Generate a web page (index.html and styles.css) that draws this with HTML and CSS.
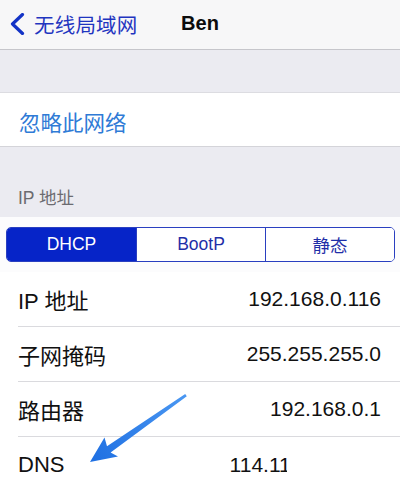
FILE: index.html
```html
<!DOCTYPE html>
<html lang="zh-CN">
<head>
<meta charset="utf-8">
<title>Ben</title>
<link rel="stylesheet" href="styles.css">
</head>
<body>
<div class="screen">
  <header class="nav">
    <div class="nav-back">
      <svg class="chev" width="16" height="22" viewBox="0 0 16 22"><path d="M13.5 1.5 L3.5 11 L13.5 20.5" fill="none" stroke="#1333c6" stroke-width="3.2" stroke-linecap="round" stroke-linejoin="round"/></svg>
      <span class="nav-back-text">无线局域网</span>
    </div>
    <div class="nav-title">Ben</div>
    <div></div>
  </header>

  <div class="spacer"></div>

  <div class="group">
    <div class="action">忽略此网络</div>
  </div>

  <div class="section-head">IP 地址</div>

  <div class="group group-ip">
    <div class="seg-wrap">
      <div class="seg">
        <div class="seg-item active">DHCP</div>
        <div class="seg-item">BootP</div>
        <div class="seg-item">静态</div>
      </div>
    </div>
    <div class="row"><span class="label">IP 地址</span><span class="value">192.168.0.116</span></div>
    <div class="row"><span class="label">子网掩码</span><span class="value">255.255.255.0</span></div>
    <div class="row"><span class="label">路由器</span><span class="value">192.168.0.1</span></div>
    <div class="row row-last"><span class="label">DNS</span><span class="value">114.114.114.114</span></div>
  </div>

  <div class="watermark"></div>

  <svg class="arrow" width="400" height="497" viewBox="0 0 400 497">
    <defs>
      <linearGradient id="ag" x1="186" y1="395" x2="90" y2="462" gradientUnits="userSpaceOnUse">
        <stop offset="0" stop-color="#4a97f2"/>
        <stop offset="1" stop-color="#1e6fe2"/>
      </linearGradient>
    </defs>
    <polygon points="185.2,394 107,446.2 104.5,437.6 90,462 118,456.5 110.6,452.6 186.8,396.2" fill="url(#ag)"/>
  </svg>
</div>
</body>
</html>
```
FILE: styles.css
```css
* { box-sizing: border-box; }
html, body { margin: 0; padding: 0; }
body {
  width: 400px;
  height: 497px;
  overflow: hidden;
  background: #ffffff;
  font-family: "Liberation Sans", "Noto Sans CJK SC", sans-serif;
  color: #111111;
}
.screen {
  position: relative;
  width: 400px;
  height: 497px;
  background: #ebebf1;
  display: flex;
  flex-direction: column;
}

.nav {
  height: 50px;
  flex: none;
  background: #f7f7f8;
  border-bottom: 1px solid #c6c6cb;
  display: grid;
  grid-template-columns: 1fr auto 1fr;
  align-items: center;
  padding-bottom: 2px;
}
.nav-back { display: flex; align-items: center; padding-left: 9px; }
.chev { display: block; margin-right: 9px; }
.nav-back-text { font-size: 20.5px; color: #1f35c0; letter-spacing: 0.2px; }
.nav-title { font-size: 20px; font-weight: bold; color: #0c0c0c; }

.spacer { height: 42px; flex: none; }

.group {
  flex: none;
  background: #ffffff;
  border-top: 1px solid #dcdce1;
  border-bottom: 1px solid #d4d4d9;
}
.action {
  height: 53px;
  display: flex;
  align-items: center;
  padding: 3px 0 0 19px;
  font-size: 21.5px;
  color: #2f7bd6;
}

.section-head {
  flex: none;
  height: 70px;
  display: flex;
  align-items: flex-end;
  padding: 0 0 8px 18px;
  font-size: 17.5px;
  color: #6b6b70;
}

.group-ip { flex: 1; border-top: none; border-bottom: none; }
.seg-wrap { padding: 10px 5px 10px 6px; background: #fcfcfd; }
.seg {
  height: 35px;
  display: grid;
  grid-template-columns: 1fr 1fr 1fr;
  border: 1.5px solid #2a3fc0;
  border-radius: 5px;
  overflow: hidden;
}
.seg-item {
  display: flex;
  align-items: center;
  justify-content: center;
  font-size: 17.5px;
  color: #1f2fa8;
  border-left: 1.5px solid #2a3fc0;
  background: #ffffff;
}
.seg-item:first-child { border-left: none; }
.seg-item.active { background: #0624c8; color: #ffffff; }

.row {
  height: 55px;
  margin-left: 18px;
  padding-right: 19px;
  border-bottom: 1px solid #dadade;
  display: flex;
  align-items: center;
  justify-content: space-between;
  font-size: 21px;
}
.row-last { border-bottom: none; }
.label { color: #111111; font-size: 22px; }
.value { color: #111111; }

.watermark {
  position: absolute;
  left: 287px;
  top: 445px;
  width: 113px;
  height: 52px;
  background: #ffffff;
}
.arrow { position: absolute; left: 0; top: 0; pointer-events: none; }
```
